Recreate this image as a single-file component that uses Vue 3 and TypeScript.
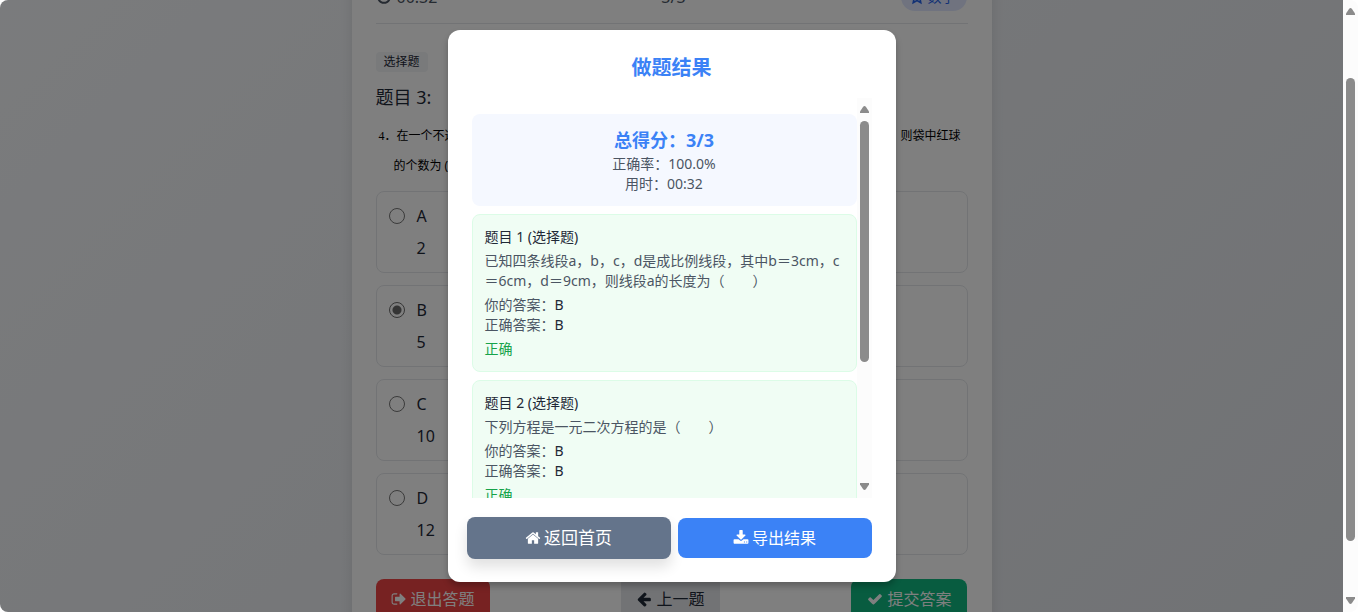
<script setup lang="ts">
import { ref } from 'vue'

interface Option { key: string; text: string }
interface Result { id: number; question: string[]; yours: string; correct: string }

const options: Option[] = [
  { key: 'A', text: '2' },
  { key: 'B', text: '5' },
  { key: 'C', text: '10' },
  { key: 'D', text: '12' },
]
const selected = ref('B')

const results: Result[] = [
  {
    id: 1,
    question: ['已知四条线段a，b，c，d是成比例线段，其中b＝3cm，c', '＝6cm，d＝9cm，则线段a的长度为（　　）'],
    yours: 'B',
    correct: 'B',
  },
  { id: 2, question: ['下列方程是一元二次方程的是（　　）'], yours: 'B', correct: 'B' },
]
</script>

<template>
  <div class="window">
    <div class="viewport">
      <main class="card">
        <header class="status">
          <span class="timer">
            <svg class="icon" viewBox="0 0 1792 1792"><path d="M1024 544v448q0 14-9 23t-23 9h-320q-14 0-23-9t-9-23v-64q0-14 9-23t23-9h224v-352q0-14 9-23t23-9h64q14 0 23 9t9 23zm416 352q0-148-73-273t-198-198-273-73-273 73-198 198-73 273 73 273 198 198 273 73 273-73 198-198 73-273zm224 0q0 209-103 385.500t-279.500 279.500-385.500 103-385.500-103-279.500-279.500-103-385.500 103-385.500 279.500-279.500 385.500-103 385.500 103 279.500 279.500 103 385.500z" /></svg>
            00:32
          </span>
          <span class="progress">3/3</span>
          <span class="subject">
            <svg class="icon" viewBox="0 0 24 24"><path d="M12 3l2.700 5.800 6.300.8-4.600 4.400 1.200 6.500L12 17.300l-5.600 3.200L7.600 14 3 9.600l6.300-.8z" fill="none" stroke="currentColor" stroke-width="2.500" /></svg>
            数学
          </span>
        </header>

        <span class="kind">选择题</span>
        <h2 class="heading">题目 3:</h2>
        <div class="stem">
          <p class="stem-row"><span><span class="num">4．</span>在一个不透</span><span>则袋中红球</span></p>
          <p class="stem-row indent">的个数为 (</p>
        </div>

        <div class="options">
          <label v-for="o in options" :key="o.key" class="option">
            <input v-model="selected" type="radio" name="answer" :value="o.key">
            <span class="option-body"><span>{{ o.key }}</span><span>{{ o.text }}</span></span>
          </label>
        </div>

        <footer class="nav">
          <button type="button" class="btn exit">
            <svg class="icon" viewBox="0 0 1792 1792"><path d="M704 1440q0 4 1 20t.5 26.500-3 23.500-10 19.500-20.500 6.500h-320q-119 0-203.500-84.500t-84.500-203.500v-704q0-119 84.500-203.500t203.500-84.500h320q13 0 22.500 9.500t9.500 22.500q0 4 1 20t.5 26.500-3 23.500-10 19.500-20.500 6.500h-320q-66 0-113 47t-47 113v704q0 66 47 113t113 47h312l11.500 1 11.500 3 8 5.500 7 9 2 13.500zm928-544q0 26-19 45l-544 544q-19 19-45 19t-45-19-19-45v-288h-448q-26 0-45-19t-19-45v-384q0-26 19-45t45-19h448v-288q0-26 19-45t45-19 45 19l544 544q19 19 19 45z" /></svg>
            退出答题
          </button>
          <button type="button" class="btn prev">
            <svg class="icon" viewBox="0 0 1792 1792"><path d="M1664 896v128q0 53-32.500 90.500t-84.500 37.500h-704l293 294q38 36 38 90t-38 90l-75 76q-37 37-90 37-52 0-91-37l-651-652q-37-37-37-90 0-52 37-91l651-650q38-38 91-38 52 0 90 38l75 74q38 38 38 91t-38 91l-293 293h704q52 0 84.500 37.500t32.500 90.500z" /></svg>
            上一题
          </button>
          <button type="button" class="btn submit">
            <svg class="icon" viewBox="0 0 1792 1792"><path d="M1671 566q0 40-28 68l-724 724-136 136q-28 28-68 28t-68-28l-136-136-362-362q-28-28-28-68t28-68l136-136q28-28 68-28t68 28l294 295 656-657q28-28 68-28t68 28l136 136q28 28 28 68z" /></svg>
            提交答案
          </button>
        </footer>
      </main>

      <div class="overlay">
        <section class="modal" role="dialog" aria-labelledby="result-title">
          <h3 id="result-title" class="modal-title">做题结果</h3>
          <div class="scroller">
            <div class="list">
              <div class="score">
                <p class="total">总得分：3/3</p>
                <p>正确率：100.0%</p>
                <p>用时：00:32</p>
              </div>
              <article v-for="r in results" :key="r.id" class="result">
                <h4>题目 {{ r.id }} (选择题)</h4>
                <div class="question"><p v-for="line in r.question" :key="line">{{ line }}</p></div>
                <div class="answers">
                  <p>你的答案：<span class="value">{{ r.yours }}</span></p>
                  <p>正确答案：<span class="value">{{ r.correct }}</span></p>
                </div>
                <p class="verdict">正确</p>
              </article>
            </div>
            <div class="bar" aria-hidden="true">
              <svg class="arrow" viewBox="0 0 9 7"><path d="M4.500 0Q5.300 0 6 1L9 5.500V7H0V5.500L3 1Q3.700 0 4.500 0z" /></svg>
              <div class="track inner-track"><div class="thumb" /></div>
              <svg class="arrow" viewBox="0 0 9 7"><path d="M4.500 7Q5.300 7 6 6L9 1.500V0H0V1.500L3 6Q3.700 7 4.500 7z" /></svg>
            </div>
          </div>
          <div class="actions">
            <button type="button" class="btn home">
              <svg class="icon" viewBox="0 0 1792 1792"><path d="M1472 992v480q0 26-19 45t-45 19h-384v-384h-256v384h-384q-26 0-45-19t-19-45v-480q0-1 .5-3t.5-3l575-474 575 474q1 2 1 6zm223-69l-62 74q-8 9-21 11h-3q-13 0-21-7l-692-577-692 577q-12 8-24 7-13-2-21-11l-62-74q-8-10-7-23.500t11-21.500l719-599q32-26 76-26t76 26l244 204v-195q0-14 9-23t23-9h192q14 0 23 9t9 23v408l219 182q10 8 11 21.500t-7 23.500z" /></svg>
              返回首页
            </button>
            <button type="button" class="btn export">
              <svg class="icon" viewBox="0 0 1792 1792"><path d="M1344 1344q0-26-19-45t-45-19-45 19-19 45 19 45 45 19 45-19 19-45zm256 0q0-26-19-45t-45-19-45 19-19 45 19 45 45 19 45-19 19-45zm128-224v320q0 40-28 68t-68 28h-1472q-40 0-68-28t-28-68v-320q0-40 28-68t68-28h465l135 136q58 56 136 56t136-56l136-136h464q40 0 68 28t28 68zm-325-569q17 41-14 70l-448 448q-18 19-45 19t-45-19l-448-448q-31-29-14-70 17-39 59-39h256v-448q0-26 19-45t45-19h256q26 0 45 19t19 45v448h256q42 0 59 39z" /></svg>
              导出结果
            </button>
          </div>
        </section>
      </div>
    </div>

    <div class="bar page-bar" aria-hidden="true">
      <svg class="arrow" viewBox="0 0 9 7"><path d="M4.500 0Q5.300 0 6 1L9 5.500V7H0V5.500L3 1Q3.700 0 4.500 0z" /></svg>
      <div class="track page-track"><div class="thumb" /></div>
      <svg class="arrow" viewBox="0 0 9 7"><path d="M4.500 7Q5.300 7 6 6L9 1.500V0H0V1.500L3 6Q3.700 7 4.500 7z" /></svg>
    </div>
  </div>
</template>

<style>
body {
  background: #fff;
}
</style>

<style scoped>
* {
  box-sizing: border-box;
  margin: 0;
}
.window {
  display: flex;
  height: 100vh;
  overflow: hidden;
  border-radius: 8px;
  font-family: "Noto Sans", "Noto Sans CJK SC", sans-serif;
  font-size: 16px;
  line-height: 24px;
  color: #1f2937;
}
.viewport {
  position: relative;
  flex: 1;
  overflow: hidden;
  background: linear-gradient(135deg, #f5f7fa, #e2e5ea);
}
.card {
  width: 100%;
  max-width: 640px;
  margin: -41px auto 0;
  padding: 24px;
  background: #fff;
  box-shadow: 0 4px 12px rgba(0, 0, 0, 0.1);
}
.icon {
  width: 16px;
  height: 16px;
  flex: none;
  fill: currentColor;
}
.status {
  display: flex;
  align-items: center;
  justify-content: space-between;
  padding-bottom: 12px;
  margin-bottom: 28px;
  border-bottom: 1px solid #e5e7eb;
  color: #4b5563;
}
.timer {
  display: flex;
  align-items: center;
  gap: 5px;
}
.progress {
  padding-left: 8px;
}
.subject {
  display: flex;
  align-items: center;
  gap: 2px;
  padding: 4px 12px 4px 8px;
  border-radius: 14px;
  background: #e0e7ff;
  color: #2563eb;
  font-size: 14px;
  line-height: 20px;
}
.kind {
  display: block;
  width: fit-content;
  padding: 2px 8px;
  border-radius: 4px;
  background: #f3f4f6;
  font-size: 12px;
  line-height: 16px;
}
.heading {
  margin-top: 11px;
  font-size: 18px;
  font-weight: 400;
  line-height: 28px;
}
.stem {
  margin-top: 10px;
  padding: 0 7px 0 3px;
  color: #000;
  font-size: 12px;
  line-height: 29px;
}
.stem-row {
  display: flex;
  justify-content: space-between;
}
.num {
  font-family: "Liberation Serif", "Noto Sans CJK SC", serif;
}
.indent {
  padding-left: 15px;
}
.options {
  display: grid;
  gap: 12px;
  margin-top: 11px;
}
.option {
  display: flex;
  align-items: flex-start;
  gap: 12px;
  padding: 12px;
  border: 1px solid #e5e7eb;
  border-radius: 8px;
}
.option input {
  appearance: none;
  width: 16px;
  height: 16px;
  margin-top: 4px;
  border: 1px solid #767676;
  border-radius: 50%;
}
.option input:checked {
  border-color: #6b6b6b;
  background: radial-gradient(circle, #6b6b6b 4px, transparent 5px);
}
.option-body {
  display: grid;
  gap: 8px;
}
.nav {
  display: flex;
  justify-content: space-between;
  margin-top: 24px;
}
.btn {
  display: flex;
  align-items: center;
  justify-content: center;
  gap: 3px;
  padding: 8px 15px;
  border: 0;
  border-radius: 8px;
  color: #fff;
  font: inherit;
}
.nav .btn {
  gap: 4px;
}
.exit {
  background: #ef4444;
}
.prev {
  border-radius: 4px;
  background: #e5e7eb;
  color: #1f2937;
}
.submit {
  padding: 8px 16px;
  background: #10b981;
}
.overlay {
  position: absolute;
  inset: 0;
  display: flex;
  align-items: center;
  justify-content: center;
  background: rgba(0, 0, 0, 0.5);
}
.modal {
  width: 448px;
  max-width: 100%;
  padding: 24px;
  border-radius: 12px;
  background: #fff;
  box-shadow: 0 4px 6px rgba(0, 0, 0, 0.25);
}
.modal-title {
  margin-bottom: 16px;
  color: #3b82f6;
  font-size: 20px;
  font-weight: 700;
  line-height: 28px;
  text-align: center;
}
.scroller {
  display: flex;
  height: 400px;
  overflow: hidden;
}
.list {
  display: flex;
  flex: 1;
  flex-direction: column;
  gap: 8px;
  min-width: 0;
  padding-top: 16px;
  color: #4b5563;
  font-size: 14px;
  line-height: 20px;
}
.score {
  padding: 12px;
  border-radius: 8px;
  background: #f5f8ff;
  text-align: center;
}
.total {
  color: #3b82f6;
  font-size: 18px;
  font-weight: 700;
  line-height: 28px;
}
.result {
  display: grid;
  gap: 4px;
  padding: 12px;
  border: 1px solid #dcfce7;
  border-radius: 8px;
  background: #f0fdf4;
}
.result h4 {
  color: #1f2937;
  font-size: 14px;
  font-weight: 400;
}
.question {
  white-space: nowrap;
}
.value {
  color: #1f2937;
}
.verdict {
  color: #16a34a;
}
.bar {
  display: flex;
  flex-direction: column;
  align-items: center;
  width: 15px;
  padding: 8px 0;
  background: #fcfcfc;
}
.arrow {
  width: 9px;
  height: 7px;
  flex: none;
  fill: #8b8b8b;
}
.track {
  display: grid;
  flex: 1;
  width: 9px;
}
.inner-track {
  grid-template-rows: 8fr 241fr 121fr;
}
.page-track {
  grid-template-rows: 63fr 463fr 56fr;
}
.thumb {
  grid-row: 2;
  border-radius: 5px;
  background: #8b8b8b;
}
.actions {
  display: grid;
  grid-template-columns: 1fr 1fr;
  gap: 12px;
  margin-top: 20px;
}
.home {
  margin: -1px -5px;
  background: #64748b;
  box-shadow: 0 8px 14px rgba(0, 0, 0, 0.12);
  font-size: 17px;
}
.export {
  background: #3b82f6;
}
</style>
